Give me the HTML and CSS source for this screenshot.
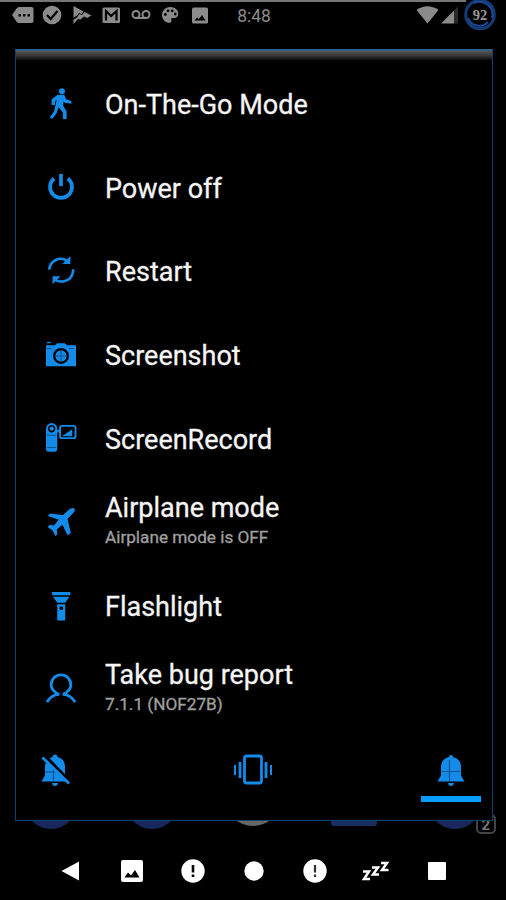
FILE: index.html
```html
<!DOCTYPE html>
<html lang="en">
<head>
<meta charset="utf-8">
<title>Power menu</title>
<link rel="stylesheet" href="styles.css">
</head>
<body>
<div class="screen">
  <header class="status">
    <div class="notifications">
      <svg width="24" height="20" viewBox="0 0 24 20"><path fill-rule="evenodd" d="M8 2h12.500q2 0 2 2v12q0 2-2 2H8q-1.500 0-2.500-1.500L1 10l4.500-6.500Q6.500 2 8 2zM7.500 9v2.400H10V9zm4.500 0v2.400h2.500V9zm4.500 0v2.400H19V9z"/></svg>
      <svg width="20" height="20" viewBox="0 0 20 20"><circle cx="10" cy="10" r="9.300"/><path class="cut" d="M5 10l3.700 4L15.500 6"/></svg>
      <svg width="20" height="20" viewBox="0 0 20 20"><path d="M1.500 1l10 5.500-2 2.500-2.500-1-2.500 3-3 1.500zM12.500 7l7 3.500-4.500 2.500-3-1.500-3.500 3L6 14l-4.500 5v-4.500l3-1.500 3-4 2.500 1z"/></svg>
      <svg width="20" height="20" viewBox="0 0 20 20"><rect x="1.500" y="2.500" width="17.500" height="15.500" rx="1.500"/><path class="cut" d="M5 15.500V6l5.200 5 5.300-5v9.500"/></svg>
      <svg width="20" height="20" viewBox="0 0 20 20"><g class="line"><circle cx="5" cy="9.500" r="3.500"/><circle cx="15" cy="9.500" r="3.500"/><path d="M5 13h10"/></g></svg>
      <svg width="20" height="20" viewBox="0 0 20 20"><path d="M10 2c5 0 8.300 3 8.300 6.700 0 3-2 4.300-4.300 4.300h-1.500c-2 0-1 2-1 3 0 1-.7 1.800-1.800 1.800C5 17.800 2 14 2 10s3.500-8 8-8z"/><g class="holes"><circle cx="5.300" cy="9.500" r="1.400"/><circle cx="8" cy="5.800" r="1.400"/><circle cx="12.200" cy="5.800" r="1.400"/><circle cx="15.200" cy="9" r="1.400"/></g></svg>
      <svg width="20" height="20" viewBox="0 0 20 20"><rect x="2" y="2.500" width="16" height="16" rx="1.500"/><path class="holes" d="M4.500 15.500l2.500-3 2 1.500 3-4 3.500 5.500z"/></svg>
    </div>
    <div class="time">8:48</div>
    <div class="system">
      <svg width="23" height="20" viewBox="0 0 23 20"><path d="M.5 5Q11.500-2.500 22.500 5L11.500 18.500z"/></svg>
      <svg width="17" height="20" viewBox="0 0 17 20"><path d="M0 18.500L13 5.500v13z"/><path opacity=".3" d="M13 5.500l4-4v17h-4z"/></svg>
      <svg class="battery" width="34" height="32" viewBox="0 0 34 32"><circle class="ring" cx="17" cy="14.500" r="14.300"/><path class="glow" d="M11 3A13 13 0 0 1 29 18M25 22A12 12 0 0 1 5 18"/><text x="17" y="19.500" text-anchor="middle">92</text></svg>
    </div>
  </header>

  <main class="dialog">
    <ul class="actions">
      <li class="action"><svg viewBox="0 0 32 34"><circle cx="17" cy="3.300" r="3.200"/><path d="M12.500 7h7l2 5 5.500 1.700v3l-8-1.200-.6-1 .1 4.500 3.500 6V33H18v-7l-4.500-5.500L11 27.500 6.500 33 4 31l4.500-6 3-12.500-2 2V18H6v-6z"/></svg><div class="label">On-The-Go Mode</div></li>
      <li class="action"><svg viewBox="0 0 32 34"><path class="stroke power" d="M8.600 6.800a11.700 11.700 0 1 0 14.800 0"/><path class="stroke power" d="M16 2v13"/></svg><div class="label">Power off</div></li>
      <li class="action"><svg viewBox="0 0 32 34"><path class="stroke" d="M3.500 15.500C4 6 15 .8 22.500 6.200M29 15c0 12-12 16.500-20 10.800"/><path d="M26 1v8.500h-8.500zM7 31v-8.500h8.500z"/></svg><div class="label">Restart</div></li>
      <li class="action"><svg viewBox="0 0 32 34"><path fill-rule="evenodd" d="M0 6.500h9.500L12 4.500h8l2.500 2H32V29H0zM16 9.500a8.500 8.500 0 1 0 0 17A8.500 8.500 0 1 0 16 9.500z"/><circle cx="16" cy="18" r="6"/><path class="detail" d="M16 12v12M10 18h12M24.500 10h5M0 10h6"/><path d="M1 3h4v1.500H1z"/></svg><div class="label">Screenshot</div></li>
      <li class="action"><svg viewBox="0 0 32 34"><path fill-rule="evenodd" d="M0 6a6 6 0 0 1 12 0v21q0 3.500-3 3.500H3q-3 0-3-3.500zm6-4a4 4 0 1 0 .01 0z"/><circle cx="6" cy="6" r="2.300"/><path class="detail" d="M1 13h10M1 26h10"/><rect class="stroke thin" x="15" y="3" width="16.500" height="13" rx="2"/><path d="M17 14l11-7.500V14zM12 7h3v3h-3z"/></svg><div class="label">ScreenRecord</div></li>
      <li class="action"><svg viewBox="0 0 32 34"><path d="M30 2.500q2 2-1 5L23 13.500l3.500 15.500-3.500 2L17.500 20l-6 5 .5 5-2 2.200-2.700-6L2 22.500 3.500 20l5 .8 5-6.300L2 10.500 4 8l14 1.500L25 3.500Q28.500 1 30 2.500z"/></svg><div class="label double">Airplane mode<small>Airplane mode is OFF</small></div></li>
      <li class="action"><svg viewBox="0 0 32 34"><path fill-rule="evenodd" d="M6.500 2h19.500v3.500H6.500zM7.500 7h17.500L20.500 13.500h-8.500zM12 15h8.500v17.500H12zm4.300 2.300a1.800 1.800 0 1 0 .01 4 1.800 1.800 0 1 0 0-4z"/></svg><div class="label">Flashlight</div></li>
      <li class="action"><svg viewBox="0 0 32 34"><path class="stroke person" d="M1 31Q6 23 14 22.800 5.500 19 5.500 12.500a10.500 10.500 0 0 1 21 0Q26.500 19 18 22.800 26 23 31 31"/></svg><div class="label double">Take bug report<small>7.1.1 (NOF27B)</small></div></li>
    </ul>
    <div class="sound">
      <button aria-label="Silent"><svg width="32" height="34" viewBox="0 0 32 34"><path d="M13.500 4a2.500 2.500 0 0 1 5 0c5 1 7.500 5 7.500 9.500v9l3.500 6h-27l3.500-6v-9C6 9 9 5 13.500 4zM13 30h6q-.5 3-3 3t-3-3z"/><path class="detail" d="M14.500 15v13M6 19h15"/><path class="slash-gap" d="M5 2l26 27"/><path class="stroke" d="M3.500 4.500L30 30.500"/></svg></button>
      <button aria-label="Vibrate"><svg width="40" height="34" viewBox="0 0 40 34"><rect class="stroke" x="11.500" y="3" width="17" height="27" rx="2"/><path class="stroke" d="M7 9v16M33 9v16"/><path class="stroke thin" d="M2 12v10M38 12v10"/></svg></button>
      <button class="selected" aria-label="Ring"><svg width="32" height="34" viewBox="0 0 32 34"><path d="M14 4a2 2 0 0 1 4 0c5 1 8 5 8 9.500v9l3.500 6h-27l3.500-6v-9C6 9 9 5 14 4zM13 30h6q-.5 3-3 3t-3-3z"/><path class="detail" d="M14.500 7v21M7 18.500h18"/></svg></button>
    </div>
  </main>

  <div class="dock"><i></i><i></i><i class="gray"></i><i class="folder"></i><i></i><b class="count">2</b></div>

  <nav class="nav">
    <svg viewBox="0 0 26 26"><path d="M3.500 13L21 3.500v19z"/></svg>
    <svg viewBox="0 0 26 26"><rect x="2" y="2" width="22" height="22" rx="2"/><path class="holes" d="M5.500 19.500l3.500-5 3 3 4-5.500 4.500 7.500z"/></svg>
    <svg viewBox="0 0 26 26"><circle cx="13" cy="13" r="11.700"/><path class="holes" d="M11.700 7h2.600v7.500h-2.600zM11.700 16.500h2.600V19h-2.600z"/></svg>
    <svg viewBox="0 0 26 26"><circle cx="13" cy="13" r="9.700"/></svg>
    <svg viewBox="0 0 26 26"><circle cx="13" cy="13" r="11.700"/><path class="holes soft" d="M11.900 7h2.200v7.500h-2.200zM11.900 16.500h2.200V19h-2.200z"/></svg>
    <svg viewBox="0 0 26 26"><path class="zzz" d="M0 13.500h6l-5 7.500h6M9 9.500h6l-5 7h6M18 5h6l-5 7h6.500"/></svg>
    <svg viewBox="0 0 26 26"><rect x="4" y="4" width="18" height="18" rx="1"/></svg>
  </nav>
</div>
</body>
</html>
```
FILE: styles.css
```css
* { box-sizing: border-box; }
body { margin: 0; background: #000; font-family: Roboto, sans-serif; }
svg { display: block; flex: none; overflow: visible; }

.screen {
  width: 506px;
  height: 900px;
  display: flex;
  flex-direction: column;
  background: #000;
  overflow: hidden;
}

.status {
  height: 49px;
  flex: none;
  display: flex;
  align-items: flex-start;
  color: #8b8b8b;
  background: linear-gradient(#777 0 2px, transparent 2px) 0 0 / 466px 49px no-repeat;
}
.status svg { fill: #8b8b8b; }
.notifications { display: grid; grid-template-columns: repeat(7, 29.500px); padding: 5px 0 0 8px; width: 226px; justify-items: center; }
.status .cut { fill: none; stroke: #000; stroke-width: 2.200; }
.status .line { fill: none; stroke: #8b8b8b; stroke-width: 2; }
.status .holes, .nav .holes { fill: #000; }
.time { width: 56px; padding-top: 5px; font-size: 17.500px; line-height: 22px; text-align: center; }
.system { display: flex; margin-left: 134px; padding-top: 5px; gap: 2px; }
.system .battery { margin: -5px 0 0 3px; }
.battery .ring { fill: #000; stroke: #123c78; stroke-width: 3; }
.battery .glow { fill: none; stroke: #1c4792; stroke-width: 2; }
.battery text { font: bold 14.500px "Liberation Serif", serif; fill: #999; }

.dialog {
  width: 478px;
  height: 772px;
  flex: none;
  margin-left: 14.500px;
  padding-top: 12.500px;
  border: 1.500px solid #0c4168;
  border-top: 2px solid #32618a;
  background: linear-gradient(#555 0, #343434 5px, #000 10px) 0 0 / 100% 11px no-repeat #000;
  position: relative;
  z-index: 1;
}
.actions { margin: 0; padding: 0; list-style: none; }
.action { height: 83.600px; display: flex; align-items: center; padding-left: 30px; }
.action svg { width: 30px; height: 32px; fill: #128be9; margin: -2px 29.500px 0 0; }
.label { color: #f5f5f5; font-size: 27px; line-height: 32px; white-space: nowrap; -webkit-text-stroke: .3px currentColor; }
.double { padding-bottom: 7px; }
.label small { display: block; color: #a0a0a0; font-size: 17.200px; line-height: 22px; margin-top: 2px; }
.stroke { fill: none; stroke: #128be9; stroke-width: 2.800; }
.power { stroke-width: 4; }
.person { stroke-width: 3; }
.thin { stroke-width: 2; }
.detail { fill: none; stroke: #07518e; stroke-width: 1.200; }

.sound { display: flex; justify-content: space-between; padding: 0 11px 0 9px; }
.sound button {
  width: 60px;
  height: 70px;
  padding: 21px 0 0;
  border: 0;
  border-bottom: 6px solid transparent;
  background: none;
  display: flex;
  justify-content: center;
  align-items: flex-start;
}
.sound svg { fill: #128be9; }
.sound .selected { border-bottom-color: #079cff; }
.slash-gap { stroke: #000; stroke-width: 3.500; }

.dock {
  position: relative;
  height: 22px;
  flex: none;
  display: grid;
  grid-template-columns: repeat(5, 1fr);
  justify-items: center;
}
.dock i { width: 54px; height: 54px; margin-top: -46px; border-radius: 50%; background: #18285c; }
.dock .gray { background: #666; height: 51px; }
.dock .folder { width: 46px; height: 20px; margin-top: -15px; border-radius: 3px; background: #192d60; }
.count {
  position: absolute;
  left: 475.500px;
  top: -7px;
  width: 20.500px;
  height: 20px;
  border: 2px solid #444;
  border-radius: 5px;
  color: #777;
  font-size: 15px;
  line-height: 18px;
  text-align: center;
}

.nav { display: grid; grid-template-columns: repeat(7, 61px); justify-content: center; justify-items: center; padding: 15px 0 0 2px; }
.nav svg { width: 26px; height: 26px; fill: #fff; }
.nav .soft { fill: #333; }
.nav .zzz { fill: none; stroke: #fff; stroke-width: 2.500; }
```
